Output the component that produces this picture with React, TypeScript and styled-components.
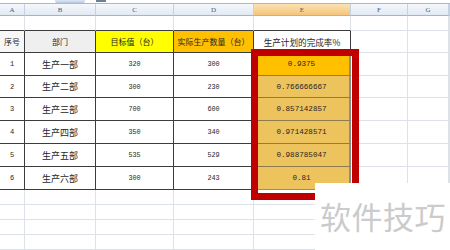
import React from 'react';
import styled, { createGlobalStyle } from 'styled-components';

const Global = createGlobalStyle`
  html, body { margin: 0; padding: 0; background: #fff; }
  body { width: 450px; height: 250px; overflow: hidden; font-family: "Noto Sans CJK SC", "Liberation Sans", sans-serif; }
`;

const Page = styled.div`
  position: relative;
  width: 450px;
  height: 250px;
  overflow: hidden;
  background: #fff;
`;

const FormulaStrip = styled.div`
  height: 4px;
  box-sizing: border-box;
  border-bottom: 1px solid #a7b9d1;
  display: flex;
  align-items: flex-start;
  gap: 3px;
  padding-left: 55px;
`;

const FxButton = styled.div`
  width: 30px;
  height: 3px;
  background: linear-gradient(#dce6f4, #b5c9e4);
  border-radius: 0 0 2px 2px;
`;

const FxMark = styled.div`
  width: 10px;
  height: 2px;
  background: #6d7f96;
  margin-left: 8px;
`;

const Sheet = styled.div`
  display: grid;
  grid-template-columns: 25px 71px 78px 80px 97px 57px 41px 1fr;
  grid-template-rows: 12px 15px 22px 23px 22px 23px 23px 23px 23px 15px 15px 15px 15px;
`;

const ColHead = styled.div<{ $active?: boolean }>`
  box-sizing: border-box;
  border-right: 1px solid #c5d2e3;
  border-bottom: 1px solid #9eb6ce;
  background: ${p => (p.$active ? 'linear-gradient(#fbe2b2, #f5c57b)' : 'linear-gradient(#f5f8fc, #e2e9f2)')};
  display: flex;
  align-items: center;
  justify-content: center;
  font: 7px "Liberation Serif", serif;
  color: #4a5a70;
`;

type Kind = 'empty' | 'table';

const Cell = styled.div<{
  $kind?: Kind;
  $topRule?: boolean;
  $bg?: string;
  $size?: number;
  $mono?: boolean;
  $inner?: string;
  $shadow?: boolean;
}>`
  box-sizing: border-box;
  display: flex;
  align-items: center;
  justify-content: center;
  white-space: nowrap;
  overflow: hidden;
  background: ${p => p.$bg || '#fff'};
  border-right: ${p =>
    p.$shadow ? '2px solid #8c8c8c' : p.$kind === 'table' ? '1px solid #3c3c3c' : '1px solid #dde2e9'};
  border-bottom: 1px solid
    ${p => (p.$inner ? p.$inner : p.$kind === 'table' || p.$topRule ? '#3c3c3c' : '#dde2e9')};
  color: #262626;
  font-family: ${p => (p.$mono ? '"Liberation Mono", monospace' : '"Noto Sans CJK SC", "Liberation Sans", sans-serif')};
  font-size: ${p => p.$size || 8}px;
`;

const RedFrame = styled.div`
  position: absolute;
  left: 251px;
  top: 49px;
  width: 108px;
  height: 151px;
  box-sizing: border-box;
  border: 7px solid #c00000;
  pointer-events: none;
`;

const Watermark = styled.div`
  position: absolute;
  left: 315px;
  top: 183px;
  right: 0;
  bottom: 0;
  background: #fff;
  padding: 15px 0 0 5px;
  box-sizing: border-box;
  font-family: "Noto Sans CJK SC", sans-serif;
  font-size: 31px;
  line-height: 36px;
  color: #cbcbcb;
  letter-spacing: 0.5px;
`;

const cols = ['A', 'B', 'C', 'D', 'E', 'F', 'G', ''];

const rows = [
  ['1', '生产一部', '320', '300', '0.9375'],
  ['2', '生产二部', '300', '230', '0.766666667'],
  ['3', '生产三部', '700', '600', '0.857142857'],
  ['4', '生产四部', '350', '340', '0.971428571'],
  ['5', '生产五部', '535', '529', '0.988785047'],
  ['6', '生产六部', '300', '243', '0.81'],
];

const EmptyTail: React.FC<{ from: number; topRule?: boolean }> = ({ from, topRule }) => (
  <>
    {cols.slice(from).map((c, i) => (
      <Cell key={i} $kind="empty" $topRule={topRule && from + i < 5} />
    ))}
  </>
);

export default function App() {
  return (
    <Page>
      <Global />
      <FormulaStrip>
        <FxButton />
        <FxMark />
      </FormulaStrip>
      <Sheet>
        {cols.map((c, i) => (
          <ColHead key={c + i} $active={c === 'E'}>
            {c}
          </ColHead>
        ))}

        {cols.map((c, i) => (
          <Cell key={'r1' + i} $kind="empty" $topRule={i < 5} />
        ))}

        <Cell $kind="table" $bg="#f7f7f7" $size={8}>序号</Cell>
        <Cell $kind="table" $bg="#efefef" $size={8}>部门</Cell>
        <Cell $kind="table" $bg="#ffff00" $size={8}>目标值（台）</Cell>
        <Cell $kind="table" $bg="#ffc000" $size={8}>实际生产数量（台）</Cell>
        <Cell $kind="table" $size={8.6}>生产计划的完成率%</Cell>
        <EmptyTail from={5} />

        {rows.map((r, ri) => (
          <React.Fragment key={r[0]}>
            <Cell $kind="table" $mono $size={7}>{r[0]}</Cell>
            <Cell $kind="table" $size={9}>{r[1]}</Cell>
            <Cell $kind="table" $mono $size={6.8}>{r[2]}</Cell>
            <Cell $kind="table" $mono $size={6.8}>{r[3]}</Cell>
            <Cell
              $kind="table"
              $mono
              $size={7.6}
              $bg={ri === 0 ? '#ffc000' : '#edc35e'}
              $inner={ri === rows.length - 1 ? '#8c8c8c' : '#8d7b4e'}
              $shadow
            >
              {r[4]}
            </Cell>
            <EmptyTail from={5} />
          </React.Fragment>
        ))}

        {[0, 1, 2, 3].map(k => (
          <EmptyTail key={'e' + k} from={0} />
        ))}
      </Sheet>
      <RedFrame />
      <Watermark>软件技巧</Watermark>
    </Page>
  );
}
